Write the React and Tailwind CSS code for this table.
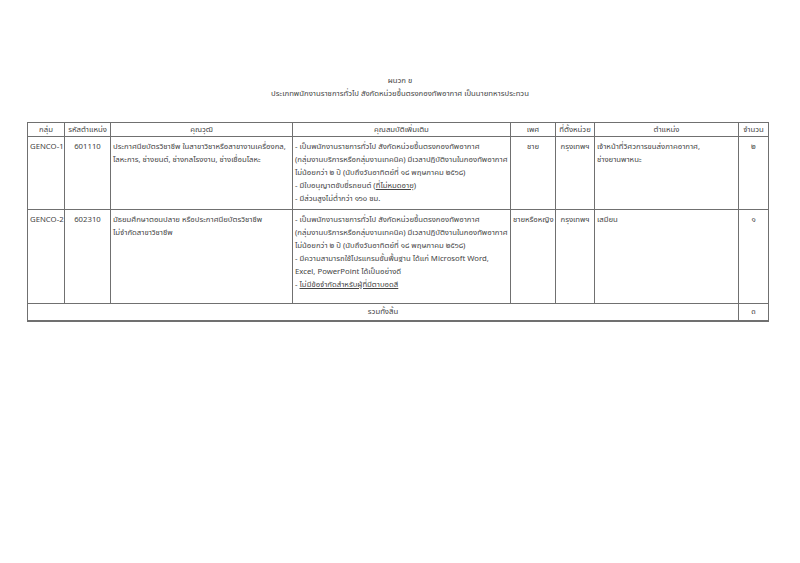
const rows = [
  {
    group: "GENCO-1",
    code: "601110",
    edu: [
      "ประกาศนียบัตรวิชาชีพ ในสาขาวิชาหรือสาขางานเครื่องกล,",
      "โลหะการ, ช่างยนต์, ช่างกลโรงงาน, ช่างเชื่อมโลหะ",
    ],
    extra: [
      { t: "- เป็นพนักงานราชการทั่วไป สังกัดหน่วยขึ้นตรงกองทัพอากาศ" },
      { t: "(กลุ่มงานบริการหรือกลุ่มงานเทคนิค) มีเวลาปฏิบัติงานในกองทัพอากาศ" },
      { t: "ไม่น้อยกว่า ๒ ปี (นับถึงวันอาทิตย์ที่ ๑๘ พฤษภาคม ๒๕๖๘)" },
      { t: "- มีใบอนุญาตขับขี่รถยนต์ (", u: "ที่ไม่หมดอายุ", after: ")" },
      { t: "- มีส่วนสูงไม่ต่ำกว่า ๑๖๐ ซม." },
    ],
    sex: "ชาย",
    place: "กรุงเทพฯ",
    pos: ["เจ้าหน้าที่วิศวการขนส่งภาคอากาศ,", "ช่างยานพาหนะ"],
    count: "๒",
    h: "h-[73px]",
  },
  {
    group: "GENCO-2",
    code: "602310",
    edu: ["มัธยมศึกษาตอนปลาย หรือประกาศนียบัตรวิชาชีพ", "ไม่จำกัดสาขาวิชาชีพ"],
    extra: [
      { t: "- เป็นพนักงานราชการทั่วไป สังกัดหน่วยขึ้นตรงกองทัพอากาศ" },
      { t: "(กลุ่มงานบริการหรือกลุ่มงานเทคนิค) มีเวลาปฏิบัติงานในกองทัพอากาศ" },
      { t: "ไม่น้อยกว่า ๒ ปี (นับถึงวันอาทิตย์ที่ ๑๘ พฤษภาคม ๒๕๖๘)" },
      { t: "- มีความสามารถใช้โปรแกรมขั้นพื้นฐาน ได้แก่ Microsoft Word," },
      { t: "Excel, PowerPoint ได้เป็นอย่างดี" },
      { t: "- ", u: "ไม่มีข้อจำกัดสำหรับผู้ที่มีตาบอดสี" },
    ],
    sex: "ชายหรือหญิง",
    place: "กรุงเทพฯ",
    pos: ["เสมียน"],
    count: "๑",
    h: "h-[94px]",
  },
];

const cell = "border border-[#707070] align-top px-[2px] pt-[3px] leading-[13px] font-normal whitespace-nowrap";

function Lines({ items }) {
  return items.map((line, i) => <div key={i}>{line}</div>);
}

export default function App() {
  return (
    <div
      className="w-[800px] h-[563px] bg-white text-[#444] text-[7.75px] overflow-hidden"
      style={{ fontFamily: '"Noto Sans Thai", "Noto Sans", "DejaVu Sans", sans-serif' }}
    >
      <div className="pt-[74px] text-center leading-[13px]">
        <div>ผนวก ข</div>
        <div>ประเภทพนักงานราชการทั่วไป สังกัดหน่วยขึ้นตรงกองทัพอากาศ เป็นนายทหารประทวน</div>
      </div>

      <table className="ml-[27px] mt-[22px] table-fixed border-collapse w-[741px]">
        <thead>
          <tr className="h-[14px]">
            <th className={`${cell} w-[37px] !align-middle !pt-0`}>กลุ่ม</th>
            <th className={`${cell} w-[46px] !align-middle !pt-0`}>รหัสตำแหน่ง</th>
            <th className={`${cell} w-[182px] !align-middle !pt-0`}>คุณวุฒิ</th>
            <th className={`${cell} w-[218px] !align-middle !pt-0`}>คุณสมบัติเพิ่มเติม</th>
            <th className={`${cell} w-[45px] !align-middle !pt-0`}>เพศ</th>
            <th className={`${cell} w-[39px] !align-middle !pt-0`}>ที่ตั้งหน่วย</th>
            <th className={`${cell} w-[144px] !align-middle !pt-0`}>ตำแหน่ง</th>
            <th className={`${cell} w-[30px] !align-middle !pt-0`}>จำนวน</th>
          </tr>
        </thead>
        <tbody>
          {rows.map((r) => (
            <tr key={r.group} className={r.h}>
              <td className={`${cell} text-center`}>{r.group}</td>
              <td className={`${cell} text-center`}>{r.code}</td>
              <td className={cell}>
                <Lines items={r.edu} />
              </td>
              <td className={cell}>
                {r.extra.map((l, i) => (
                  <div key={i}>
                    {l.t}
                    {l.u && <span className="underline">{l.u}</span>}
                    {l.after}
                  </div>
                ))}
              </td>
              <td className={`${cell} text-center`}>{r.sex}</td>
              <td className={`${cell} text-center`}>{r.place}</td>
              <td className={cell}>
                <Lines items={r.pos} />
              </td>
              <td className={`${cell} text-center`}>{r.count}</td>
            </tr>
          ))}
          <tr className="h-[17px] border-b-2 border-[#707070]">
            <td colSpan={7} className={`${cell} text-center !align-middle !pt-0`}>
              รวมทั้งสิ้น
            </td>
            <td className={`${cell} text-center !align-middle !pt-0`}>๓</td>
          </tr>
        </tbody>
      </table>
    </div>
  );
}
